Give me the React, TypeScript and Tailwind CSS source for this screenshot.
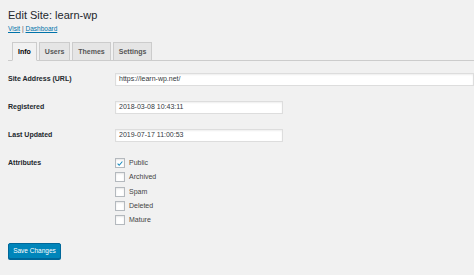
const font = "font-['Liberation_Sans',Arial,sans-serif]";

const tabs = ["Info", "Users", "Themes", "Settings"];

const attributes = [
  { label: "Public", checked: true },
  { label: "Archived", checked: false },
  { label: "Spam", checked: false },
  { label: "Deleted", checked: false },
  { label: "Mature", checked: false },
];

const inputClasses =
  "flex h-[13px] items-center border border-[#ddd] bg-white pl-[3px] text-[#32373c] shadow-[inset_0_1px_2px_rgba(0,0,0,0.07)]";

function Check({ checked }: { checked: boolean }) {
  return (
    <span className="flex h-[10px] w-[10px] items-center justify-center border border-[#b4b9be] bg-white shadow-[inset_0_1px_2px_rgba(0,0,0,0.1)]">
      {checked && (
        <svg viewBox="0 0 10 10" className="h-[9px] w-[9px]">
          <path d="M2 5.2 L4 7.2 L8 2.5" fill="none" stroke="#1e8cbe" strokeWidth="1.4" />
        </svg>
      )}
    </span>
  );
}

export default function App() {
  return (
    <div className={`h-[275px] w-[474px] overflow-hidden bg-[#f1f1f1] pl-[8px] text-[#23282d] ${font}`}>
      <h1 className="pt-[8px] text-[11px] leading-[14px] text-[#23282d]">Edit Site: learn-wp</h1>
      <p className="mt-[2px] text-[6.5px] leading-[9px] text-[#555]">
        <a className="text-[#0073aa] underline">Visit</a> | <a className="text-[#0073aa] underline">Dashboard</a>
      </p>

      <div className="mt-[9px] flex gap-[2px] border-b border-[#ccc] pl-[4px]">
        {tabs.map((t, i) => (
          <span
            key={t}
            className={`-mb-px border border-[#ccc] px-[5px] text-[7px] font-bold leading-[17px] ${
              i === 0 ? "border-b-[#f1f1f1] bg-[#f1f1f1] text-[#000]" : "bg-[#e5e5e5] text-[#555]"
            }`}
          >
            {t}
          </span>
        ))}
      </div>

      <div className="mt-[12px] flex flex-col gap-[15px] text-[7px]">
        <div className="flex items-center">
          <span className="w-[107px] font-bold">Site Address (URL)</span>
          <span className={`${inputClasses} flex-1`}>https://learn-wp.net/</span>
        </div>
        <div className="flex items-center">
          <span className="w-[107px] font-bold">Registered</span>
          <span className={`${inputClasses} w-[168px]`}>2018-03-08 10:43:11</span>
        </div>
        <div className="flex items-center">
          <span className="w-[107px] font-bold">Last Updated</span>
          <span className={`${inputClasses} w-[168px]`}>2019-07-17 11:00:53</span>
        </div>
        <div className="mt-[1px] flex items-start">
          <span className="w-[107px] font-bold leading-[10px]">Attributes</span>
          <div className="flex flex-col gap-[4.3px]">
            {attributes.map((a) => (
              <label key={a.label} className="flex items-center gap-[4px] leading-[10px] text-[#444]">
                <Check checked={a.checked} />
                {a.label}
              </label>
            ))}
          </div>
        </div>
      </div>

      <button
        type="button"
        className="mt-[18px] h-[16px] w-[53px] rounded-[2px] border border-[#006799] bg-[#0085ba] text-[6.5px] leading-none text-white shadow-[0_1px_0_#006799]"
      >
        Save Changes
      </button>
    </div>
  );
}
